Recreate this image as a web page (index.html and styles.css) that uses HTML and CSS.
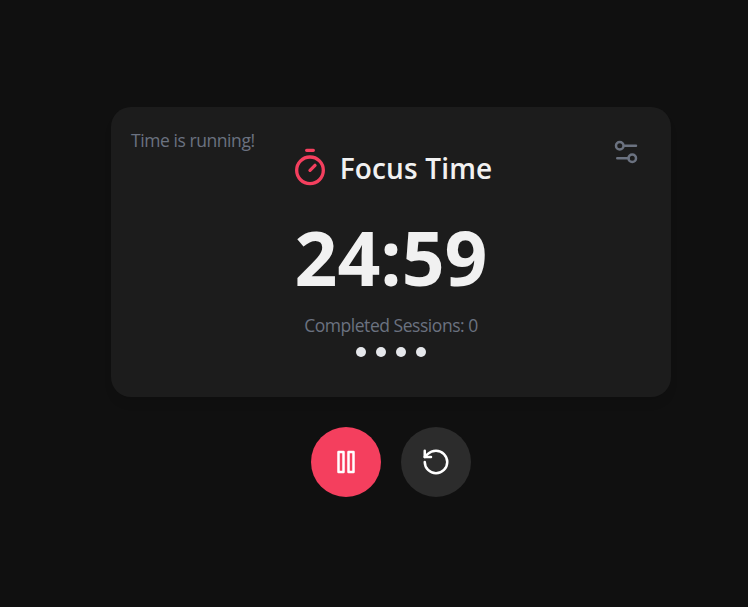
FILE: index.html
```html
<!DOCTYPE html>
<html lang="en">
<head>
<meta charset="utf-8">
<title>Focus Time</title>
<link rel="stylesheet" href="styles.css">
</head>
<body>
<main class="timer">
  <section class="card">
    <p class="status">Time is running!</p>
    <button class="settings" aria-label="Settings">
      <svg class="icon" width="30" height="30" viewBox="0 0 24 24"><path d="M20 7h-9M14 17H5"/><circle cx="17" cy="17" r="3"/><circle cx="7" cy="7" r="3"/></svg>
    </button>
    <header class="heading">
      <svg class="icon heading-icon" width="40" height="40" viewBox="0 0 24 24"><path d="M10 2h4M12 14l3-3"/><circle cx="12" cy="14" r="8"/></svg>
      <h1 class="title">Focus Time</h1>
    </header>
    <div class="clock">24:59</div>
    <p class="sessions">Completed Sessions: 0</p>
    <div class="dots"><i class="dot"></i><i class="dot"></i><i class="dot"></i><i class="dot"></i></div>
  </section>
  <div class="controls">
    <button class="control control-main" aria-label="Pause">
      <svg class="icon" width="30" height="30" viewBox="0 0 24 24"><rect x="6" y="4" width="4" height="16"/><rect x="14" y="4" width="4" height="16"/></svg>
    </button>
    <button class="control" aria-label="Reset">
      <svg class="icon" width="30" height="30" viewBox="0 0 24 24"><path d="M3 12a9 9 0 1 0 9-9 9.75 9.75 0 0 0-6.74 2.74L3 8"/><path d="M3 3v5h5"/></svg>
    </button>
  </div>
</main>
</body>
</html>
```
FILE: styles.css
```css
* { box-sizing: border-box; margin: 0; padding: 0; }
body {
  background: #101010;
  color: #f1f1f1;
  font-family: "Segoe UI", "Open Sans", "Noto Sans", sans-serif;
  height: 607px;
  overflow: hidden;
}
.timer { width: 560px; margin: 107px 0 0 111px; }
.card {
  position: relative;
  height: 290px;
  padding-top: 40px;
  border-radius: 20px;
  background: #1c1c1c;
  box-shadow: 0 8px 12px -4px rgba(0, 0, 0, 0.12);
  display: flex;
  flex-direction: column;
  align-items: center;
}
.icon {
  display: block;
  fill: none;
  stroke: currentColor;
  stroke-width: 2;
  stroke-linecap: round;
  stroke-linejoin: round;
}
button { border: 0; background: none; color: inherit; }
.status, .sessions {
  color: #6b7280;
  font-size: 17.5px;
  font-weight: 400;
  line-height: 24px;
  letter-spacing: -0.43px;
  white-space: nowrap;
}
.status { position: absolute; left: 20px; top: 21px; }
.settings { position: absolute; right: 30px; top: 30px; color: #6b7280; }
.heading { display: flex; gap: 10px; height: 44px; }
.heading-icon { color: #f43f5e; }
.title { font-size: 28px; font-weight: 600; line-height: 42px; letter-spacing: 0.15px; white-space: nowrap; }
.clock { font-size: 75px; font-weight: 700; line-height: 100px; margin-top: 16px; white-space: nowrap; }
.sessions { margin-top: 6px; letter-spacing: -0.46px; }
.dots { display: flex; gap: 10px; margin-top: 10px; }
.dot { width: 10px; height: 10px; border-radius: 50%; background: #e5e7eb; }
.controls { display: flex; justify-content: center; gap: 20px; margin-top: 30px; }
.control {
  width: 70px;
  height: 70px;
  border-radius: 50%;
  background: #2c2c2c;
  color: #fff;
  display: grid;
  place-items: center;
}
.control-main { background: #f43f5e; }
```
